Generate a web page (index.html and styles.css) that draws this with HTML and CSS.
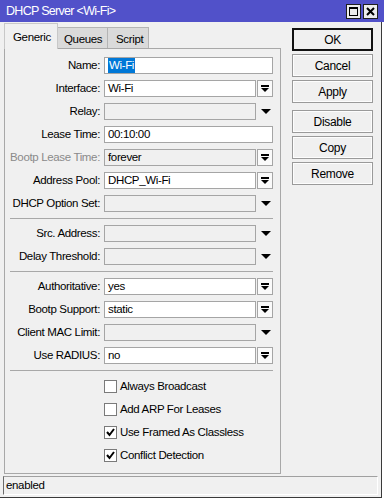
FILE: index.html
```html
<!DOCTYPE html>
<html lang="en">
<head>
  <meta charset="UTF-8">
  <title>DHCP Server &lt;Wi-Fi&gt;</title>
  <link rel="stylesheet" href="styles.css">
</head>
<body>

  <div class="titlebar">
    <span class="title">DHCP Server &lt;Wi-Fi&gt;</span>
    <div class="winbtns">
      <span class="winbtn"><span class="max-icon"></span></span>
      <span class="winbtn">
        <svg width="9" height="9" viewBox="0 0 9 9"><path d="M1 1 L8 8 M8 1 L1 8" stroke="#000" stroke-width="2"/></svg>
      </span>
    </div>
  </div>

  <div class="window">
    <div class="main">
      <div class="left">
        <div class="tabs">
          <div class="tab active">Generic</div>
          <div class="tab">Queues</div>
          <div class="tab">Script</div>
        </div>

        <div class="panel">
          <div class="row">
            <label>Name:</label>
            <div class="field full"><span class="sel">Wi-Fi</span></div>
          </div>
          <div class="row">
            <label>Interface:</label>
            <div class="field">Wi-Fi</div>
            <div class="dd"><svg width="8" height="7" viewBox="0 0 8 7"><rect x="0" y="0" width="8" height="2" fill="#000"/><path d="M0 3 H8 L4 7 Z" fill="#000"/></svg></div>
          </div>
          <div class="row">
            <label>Relay:</label>
            <div class="field off"></div>
            <div class="arrow"><span class="tri"></span></div>
          </div>
          <div class="row">
            <label>Lease Time:</label>
            <div class="field full">00:10:00</div>
          </div>
          <div class="row">
            <label class="dim">Bootp Lease Time:</label>
            <div class="field off">forever</div>
            <div class="dd"><svg width="8" height="7" viewBox="0 0 8 7"><rect x="0" y="0" width="8" height="2" fill="#000"/><path d="M0 3 H8 L4 7 Z" fill="#000"/></svg></div>
          </div>
          <div class="row">
            <label>Address Pool:</label>
            <div class="field">DHCP_Wi-Fi</div>
            <div class="dd"><svg width="8" height="7" viewBox="0 0 8 7"><rect x="0" y="0" width="8" height="2" fill="#000"/><path d="M0 3 H8 L4 7 Z" fill="#000"/></svg></div>
          </div>
          <div class="row">
            <label>DHCP Option Set:</label>
            <div class="field off"></div>
            <div class="arrow"><span class="tri"></span></div>
          </div>

          <div class="sep"></div>

          <div class="row">
            <label>Src. Address:</label>
            <div class="field off"></div>
            <div class="arrow"><span class="tri"></span></div>
          </div>
          <div class="row">
            <label>Delay Threshold:</label>
            <div class="field off"></div>
            <div class="arrow"><span class="tri"></span></div>
          </div>

          <div class="sep"></div>

          <div class="row">
            <label>Authoritative:</label>
            <div class="field">yes</div>
            <div class="dd"><svg width="8" height="7" viewBox="0 0 8 7"><rect x="0" y="0" width="8" height="2" fill="#000"/><path d="M0 3 H8 L4 7 Z" fill="#000"/></svg></div>
          </div>
          <div class="row">
            <label>Bootp Support:</label>
            <div class="field">static</div>
            <div class="dd"><svg width="8" height="7" viewBox="0 0 8 7"><rect x="0" y="0" width="8" height="2" fill="#000"/><path d="M0 3 H8 L4 7 Z" fill="#000"/></svg></div>
          </div>
          <div class="row">
            <label>Client MAC Limit:</label>
            <div class="field off"></div>
            <div class="arrow"><span class="tri"></span></div>
          </div>
          <div class="row">
            <label>Use RADIUS:</label>
            <div class="field">no</div>
            <div class="dd"><svg width="8" height="7" viewBox="0 0 8 7"><rect x="0" y="0" width="8" height="2" fill="#000"/><path d="M0 3 H8 L4 7 Z" fill="#000"/></svg></div>
          </div>

          <div class="sep last"></div>

          <div class="check"><span class="box"></span>Always Broadcast</div>
          <div class="check"><span class="box"></span>Add ARP For Leases</div>
          <div class="check"><span class="box"><svg width="11" height="11" viewBox="0 0 11 11"><path d="M2 5 L4.5 8 L9 2" stroke="#000" stroke-width="2" fill="none"/></svg></span>Use Framed As Classless</div>
          <div class="check"><span class="box"><svg width="11" height="11" viewBox="0 0 11 11"><path d="M2 5 L4.5 8 L9 2" stroke="#000" stroke-width="2" fill="none"/></svg></span>Conflict Detection</div>
        </div>
      </div>

      <div class="buttons">
        <button class="btn default">OK</button>
        <button class="btn">Cancel</button>
        <button class="btn">Apply</button>
        <button class="btn group">Disable</button>
        <button class="btn">Copy</button>
        <button class="btn">Remove</button>
      </div>
    </div>

    <div class="status">enabled</div>
  </div>

</body>
</html>
```

FILE: styles.css
```css
body {
  margin: 0;
  background: #ffffff;
  font-family: "Liberation Sans", Arial, sans-serif;
  font-size: 11.5px;
  letter-spacing: -0.35px;
  color: #000;
}
.titlebar {
  width: 384px;
  height: 22px;
  background: #5151c9;
  display: flex;
  align-items: center;
  justify-content: space-between;
  box-sizing: border-box;
  padding: 0 6px 0 6px;
}
.title {
  color: #fff;
  font-size: 12.5px;
  letter-spacing: -0.7px;
}
.winbtns {
  display: flex;
  gap: 2px;
}
.winbtn {
  width: 15px;
  height: 15px;
  box-sizing: border-box;
  border: 1px solid #1e1e1e;
  background: #ececec;
  display: flex;
  align-items: center;
  justify-content: center;
}
.max-icon {
  width: 9px;
  height: 9px;
  box-sizing: border-box;
  border: 1px solid #000;
  border-top-width: 2px;
}
.window {
  width: 381px;
  height: 475px;
  background: #f0f0f0;
  border-right: 1px solid #3a3a3a;
  border-bottom: 1px solid #3a3a3a;
}
.main {
  display: flex;
  padding-left: 4px;
}
.left {
  width: 277px;
}
.tabs {
  display: flex;
  align-items: flex-end;
  height: 26px;
}
.tab {
  height: 21px;
  box-sizing: border-box;
  padding: 3px 6px 0;
  background: #dadada;
  border: 1px solid #b4b4b4;
  border-bottom: none;
  line-height: 17px;
  margin-left: -1px;
}
.tab:first-child {
  margin-left: 0;
}
.tab.active {
  height: 26px;
  width: 54px;
  padding: 5px 0 0 8px;
  background: #f0f0f0;
  border-color: #c8c8c8;
  margin-bottom: -1px;
  position: relative;
  z-index: 1;
}
.tab:nth-child(2) {
  width: 51px;
  padding-left: 6px;
}
.tab:nth-child(3) {
  width: 42px;
  padding-left: 8px;
}
.panel {
  height: 426px;
  box-sizing: border-box;
  border: 1px solid #a8a8a8;
  padding: 8px 0 0 0;
}
.row {
  display: flex;
  height: 17px;
  margin-bottom: 6px;
}
.row label {
  width: 95px;
  text-align: right;
  margin-right: 4px;
  line-height: 17px;
  white-space: nowrap;
}
.row label.dim {
  color: #8a8a8a;
}
.field {
  width: 152px;
  height: 17px;
  box-sizing: border-box;
  border: 1px solid #a5a5a5;
  background: #fff;
  padding-left: 3px;
  line-height: 15px;
  white-space: nowrap;
}
.field.full {
  width: 169px;
}
.field.off {
  background: #f0f0f0;
}
.sel {
  background: #0078d7;
  color: #fff;
  padding: 0 1px;
  display: inline-block;
  line-height: 15px;
}
.dd {
  width: 16px;
  height: 17px;
  box-sizing: border-box;
  margin-left: 1px;
  border: 1px solid #a5a5a5;
  background: #fafafa;
  display: flex;
  align-items: center;
  justify-content: center;
}
.arrow {
  width: 17px;
  height: 17px;
  display: flex;
  align-items: center;
  justify-content: center;
}
.tri {
  width: 0;
  height: 0;
  border-left: 5px solid transparent;
  border-right: 5px solid transparent;
  border-top: 5px solid #000;
  margin-left: 3px;
}
.sep {
  height: 1px;
  background: #a8a8a8;
  margin: 1px 7px 6px 5px;
}
.sep.last {
  margin-bottom: 9px;
}
.check {
  display: flex;
  align-items: center;
  height: 13px;
  margin: 0 0 10px 99px;
  line-height: 13px;
  white-space: nowrap;
}
.box {
  width: 13px;
  height: 13px;
  box-sizing: border-box;
  border: 1px solid #7a7a7a;
  background: #fff;
  margin-right: 3px;
  display: flex;
  align-items: center;
  justify-content: center;
}
.buttons {
  display: flex;
  flex-direction: column;
  margin-left: 11px;
  padding-top: 6px;
  width: 81px;
}
.btn {
  height: 23px;
  margin-bottom: 3px;
  font-family: inherit;
  font-size: 12px;
  letter-spacing: -0.3px;
  background: #f0f0f0;
  border: 1px solid #9a9a9a;
  box-shadow: inset 0 0 0 1px #fdfdfd;
  padding: 0;
  color: #000;
}
.btn.default {
  border: 2px solid #111;
  box-shadow: none;
}
.btn.group {
  margin-top: 4px;
}
.status {
  margin: 2px 0 0 3px;
  width: 375px;
  height: 19px;
  box-sizing: border-box;
  border-top: 1px solid #a0a0a0;
  border-left: 1px solid #6a6a6a;
  border-bottom: 1px solid #fff;
  border-right: 1px solid #fff;
  padding-left: 2px;
  line-height: 17px;
}
```
